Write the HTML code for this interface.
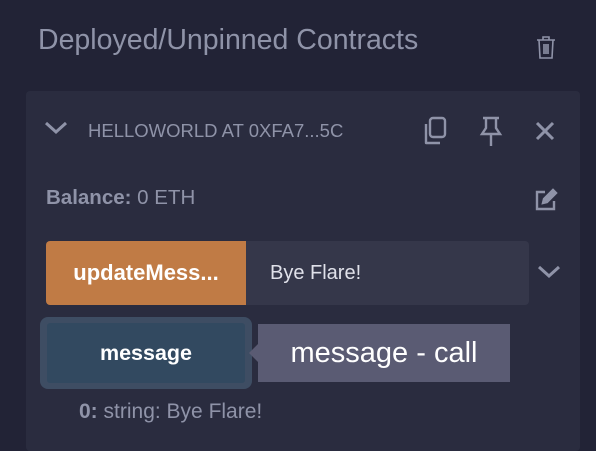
<!DOCTYPE html>
<html><head><style>
body{margin:0;width:596px;height:442px;background:#222336;font-family:"Liberation Sans",sans-serif;overflow:hidden;position:relative}
.a{position:absolute;white-space:nowrap}
</style></head><body>
<div class="a" style="left:38px;top:24px;font-size:28.5px;color:#8f93a8;">Deployed/Unpinned Contracts</div>
<svg class="a" style="left:535px;top:35px" width="22" height="25" viewBox="0 0 22 25" fill="none" stroke="#8f93a8" stroke-width="2"><path d="M2 5h18M8 5V2h6v3M4 5l1 18h12l1-18M9 9v10M11 9v10M13 9v10" stroke-width="1.6"/></svg>
<div class="a" style="left:26px;top:91px;width:554px;height:360px;background:#2a2c3f;border-radius:4px"></div>
<svg class="a" style="left:44px;top:120px" width="24" height="16" viewBox="0 0 24 16"><path d="M2 3l10 9 10-9" stroke="#8f93a8" stroke-width="3" fill="none"/></svg>
<div class="a" style="left:88px;top:120px;font-size:18.5px;color:#8f93a8;">HELLOWORLD AT 0XFA7...5C</div>
<svg class="a" style="left:421px;top:116px" width="28" height="32" viewBox="0 0 28 32" fill="none" stroke="#8f93a8" stroke-width="2.4"><rect x="9" y="2" width="15" height="19" rx="3"/><path d="M5 8v19h14" stroke-linejoin="round"/></svg>
<svg class="a" style="left:478px;top:115px" width="26" height="32" viewBox="0 0 26 32" fill="none" stroke="#8f93a8" stroke-width="2.4"><path d="M5 3h16M8 3v10l-4 6h18l-4-6V3M13 19v12"/></svg>
<svg class="a" style="left:534px;top:120px" width="22" height="22" viewBox="0 0 22 22"><path d="M3 3l16 16M19 3L3 19" stroke="#8f93a8" stroke-width="3"/></svg>
<div class="a" style="left:46px;top:186px;font-size:20.5px;color:#8f93a8;"><b>Balance:</b> 0 ETH</div>
<svg class="a" style="left:533px;top:187px" width="26" height="26" viewBox="0 0 26 26" fill="none" stroke="#8f93a8" stroke-width="2.4"><path d="M12 5H4v17h17v-8"/><path d="M10 16l1-4 9-9 3 3-9 9z" fill="#8f93a8"/></svg>
<div class="a" style="left:46px;top:241px;width:200px;height:64px;background:#c07b45;border-radius:4px 0 0 4px;color:#fff;font-weight:bold;font-size:22px;line-height:64px;text-align:center">updateMess...</div>
<div class="a" style="left:246px;top:241px;width:283px;height:64px;background:#35374a;border-radius:0 4px 4px 0;color:#e0e1ea;font-size:20px;line-height:64px;padding-left:24px;box-sizing:border-box">Bye Flare!</div>
<svg class="a" style="left:537px;top:264px" width="24" height="16" viewBox="0 0 24 16"><path d="M2 3l10 9 10-9" stroke="#8f93a8" stroke-width="3" fill="none"/></svg>
<div class="a" style="left:40px;top:317px;width:212px;height:72px;background:#3e4d63;border-radius:8px"></div>
<div class="a" style="left:47px;top:323px;width:198px;height:60px;background:#324960;border-radius:3px;color:#fff;font-weight:bold;font-size:21.5px;line-height:60px;text-align:center">message</div>
<div class="a" style="left:258px;top:324px;width:252px;height:58px;background:#5a5b73;color:#fff;font-size:29px;line-height:58px;text-align:center">message - call</div>
<div class="a" style="left:249px;top:344px;width:0;height:0;border-top:9px solid transparent;border-bottom:9px solid transparent;border-right:9px solid #5a5b73"></div>
<div class="a" style="left:79px;top:400px;font-size:21px;color:#8f93a8;"><b>0:</b> string: Bye Flare!</div>
</body></html>
